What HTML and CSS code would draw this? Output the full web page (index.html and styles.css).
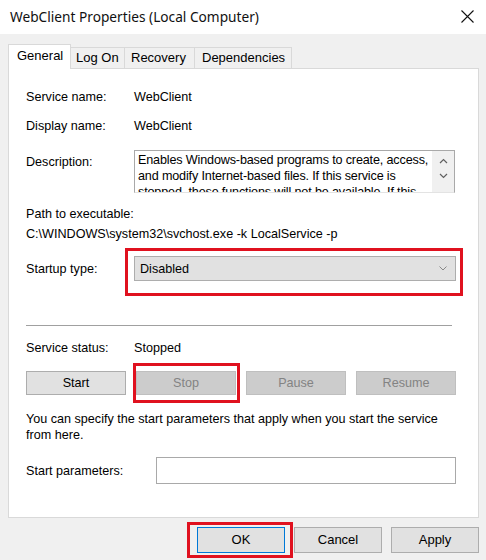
FILE: index.html
```html
<!DOCTYPE html>
<html>
<head>
<meta charset="utf-8">
<link rel="stylesheet" href="styles.css">
</head>
<body>
<div class="window">
  <div class="titlebar">
    <span class="title">WebClient Properties (Local Computer)</span>
    <svg class="close" width="13" height="13" viewBox="0 0 13 13"><path d="M0.5 0.5 L12.5 12.5 M12.5 0.5 L0.5 12.5" stroke="#111" stroke-width="1.1" fill="none"/></svg>
  </div>
  <div class="main">
    <div class="tabs">
      <div class="tab active">General</div>
      <div class="tab">Log On</div>
      <div class="tab">Recovery</div>
      <div class="tab">Dependencies</div>
    </div>
    <div class="panel">
      <div class="row r-name"><span class="label">Service name:</span><span>WebClient</span></div>
      <div class="row r-display"><span class="label">Display name:</span><span>WebClient</span></div>
      <div class="row r-desc">
        <span class="label desc-label">Description:</span>
        <div class="textbox">
          <div class="tb-text">Enables Windows-based programs to create, access, and modify Internet-based files. If this service is stopped, these functions will not be available. If this service is disabled, any services that explicitly depend on it will fail to start.</div>
          <div class="tb-scroll">
            <svg width="9" height="6" viewBox="0 0 9 6"><path d="M1 5 L4.5 1.5 L8 5" stroke="#606060" stroke-width="1.2" fill="none"/></svg>
            <svg width="9" height="6" viewBox="0 0 9 6"><path d="M1 1 L4.5 4.5 L8 1" stroke="#606060" stroke-width="1.2" fill="none"/></svg>
          </div>
        </div>
      </div>
      <div class="row r-pathlabel">Path to executable:</div>
      <div class="row r-path">C:\WINDOWS\system32\svchost.exe -k LocalService -p</div>
      <div class="row r-startup">
        <span class="label">Startup type:</span>
        <div class="select">
          <span>Disabled</span>
          <svg width="8" height="5" viewBox="0 0 8 5"><path d="M0.5 0.5 L4 4 L7.5 0.5" stroke="#888" stroke-width="1" fill="none"/></svg>
          <div class="redbox rb-select"></div>
        </div>
      </div>
      <div class="separator"></div>
      <div class="row r-status"><span class="label">Service status:</span><span>Stopped</span></div>
      <div class="btnrow">
        <div class="btn">Start</div>
        <div class="btn disabled">Stop<div class="redbox rb-stop"></div></div>
        <div class="btn disabled">Pause</div>
        <div class="btn disabled">Resume</div>
      </div>
      <div class="note">You can specify the start parameters that apply when you start the service from here.</div>
      <div class="row r-params">
        <span class="label params-label">Start parameters:</span>
        <div class="input"></div>
      </div>
    </div>
    <div class="footer">
      <div class="btn fbtn ok">OK<div class="redbox rb-ok"></div></div>
      <div class="btn fbtn">Cancel</div>
      <div class="btn fbtn">Apply</div>
    </div>
  </div>
</div>
</body>
</html>
```

FILE: styles.css
```css
* { box-sizing: border-box; }
html, body { margin: 0; padding: 0; }
body {
  width: 486px;
  height: 560px;
  background: #f0f0f0;
  font-family: "Liberation Sans", Arial, sans-serif;
  font-size: 12.6px;
  color: #000;
  overflow: hidden;
}
.window { width: 486px; height: 560px; }
.titlebar {
  height: 34px;
  background: #fff;
  display: flex;
  align-items: center;
  justify-content: space-between;
  padding: 0 12px 0 10px;
}
.title {
  font-family: "Noto Sans", "Open Sans", sans-serif;
  font-size: 13.7px;
  color: #111;
  margin-top: -1px;
}
.close { margin-top: -1px; }
.main { padding: 0 7px 0 8px; }
.tabs {
  display: flex;
  align-items: flex-end;
  height: 34px;
  padding-top: 10px;
  position: relative;
  z-index: 1;
}
.tab {
  height: 21px;
  line-height: 20px;
  padding: 0 6px;
  border: 1px solid #d9d9d9;
  border-bottom: none;
  border-left: none;
  background: #f0f0f0;
  font-size: 13px;
  white-space: nowrap;
}
.tab.active {
  height: 25px;
  line-height: 22px;
  background: #fff;
  border-left: 1px solid #d9d9d9;
  padding: 0 8px;
  margin-bottom: -1px;
  width: 63px;
}
.tab:nth-child(2) { width: 54px; padding-left: 5px; }
.tab:nth-child(3) { width: 70px; padding-left: 6px; }
.tab:nth-child(4) { width: 97px; padding-left: 7px; }
.panel {
  background: #fff;
  border: 1px solid #d9d9d9;
  height: 450px;
  padding: 0 0 0 17px;
}
.row {
  display: flex;
  align-items: center;
  line-height: 16px;
  height: 16px;
  white-space: nowrap;
}
.label { width: 108px; flex: none; }
.r-name { margin-top: 20px; }
.r-display { margin-top: 13px; }
.r-desc {
  margin-top: 16px;
  height: 43px;
  align-items: flex-start;
}
.desc-label { margin-top: 4px; }
.textbox {
  width: 321px;
  height: 43px;
  border: 1px solid #a9a9a9;
  border-bottom-color: #e3e3e3;
  display: flex;
  overflow: hidden;
}
.tb-text {
  flex: 1;
  padding: 1px 0 0 3px;
  line-height: 16px;
  font-size: 12.6px;
  letter-spacing: -0.15px;
  white-space: normal;
  overflow: hidden;
}
.tb-scroll {
  width: 22px;
  flex: none;
  background: #f0f0f0;
  display: flex;
  flex-direction: column;
  align-items: center;
  padding-top: 7px;
  gap: 9px;
}
.tb-scroll svg { display: block; }
.r-pathlabel { margin-top: 13px; }
.r-path { margin-top: 4px; }
.r-startup { margin-top: 14px; height: 25px; }
.select {
  position: relative;
  width: 322px;
  height: 25px;
  background: #e1e1e1;
  border: 1px solid #adadad;
  display: flex;
  align-items: center;
  justify-content: space-between;
  padding: 0 8px 0 5px;
}
.redbox {
  position: absolute;
  border: 3px solid #e0111f;
  pointer-events: none;
}
.rb-select { left: -10px; top: -9px; right: -8px; bottom: -16px; }
.separator {
  margin-top: 44px;
  width: 426px;
  height: 1px;
  background: #a0a0a0;
}
.r-status { margin-top: 14px; }
.btnrow {
  display: flex;
  gap: 10px;
  margin-top: 15px;
}
.btn {
  position: relative;
  width: 100px;
  height: 24px;
  line-height: 22px;
  text-align: center;
  background: #e1e1e1;
  border: 1px solid #adadad;
}
.btn.disabled {
  background: #cccccc;
  border-color: #bfbfbf;
  color: #838383;
}
.rb-stop { left: -4px; top: -9px; right: -5px; bottom: -9px; }
.note {
  margin-top: 16px;
  line-height: 16px;
  width: 430px;
}
.r-params { margin-top: 14px; height: 27px; }
.params-label { width: 130px; }
.input {
  width: 300px;
  height: 27px;
  border: 1px solid #a9a9a9;
  background: #fff;
}
.footer {
  display: flex;
  justify-content: flex-end;
  gap: 9px;
  margin-top: 9px;
  font-size: 13px;
}
.fbtn { width: 88px; height: 26px; line-height: 24px; }
.ok { border-color: #0078d7; }
.rb-ok { left: -11px; top: -6px; right: -9px; bottom: -6px; }
```
